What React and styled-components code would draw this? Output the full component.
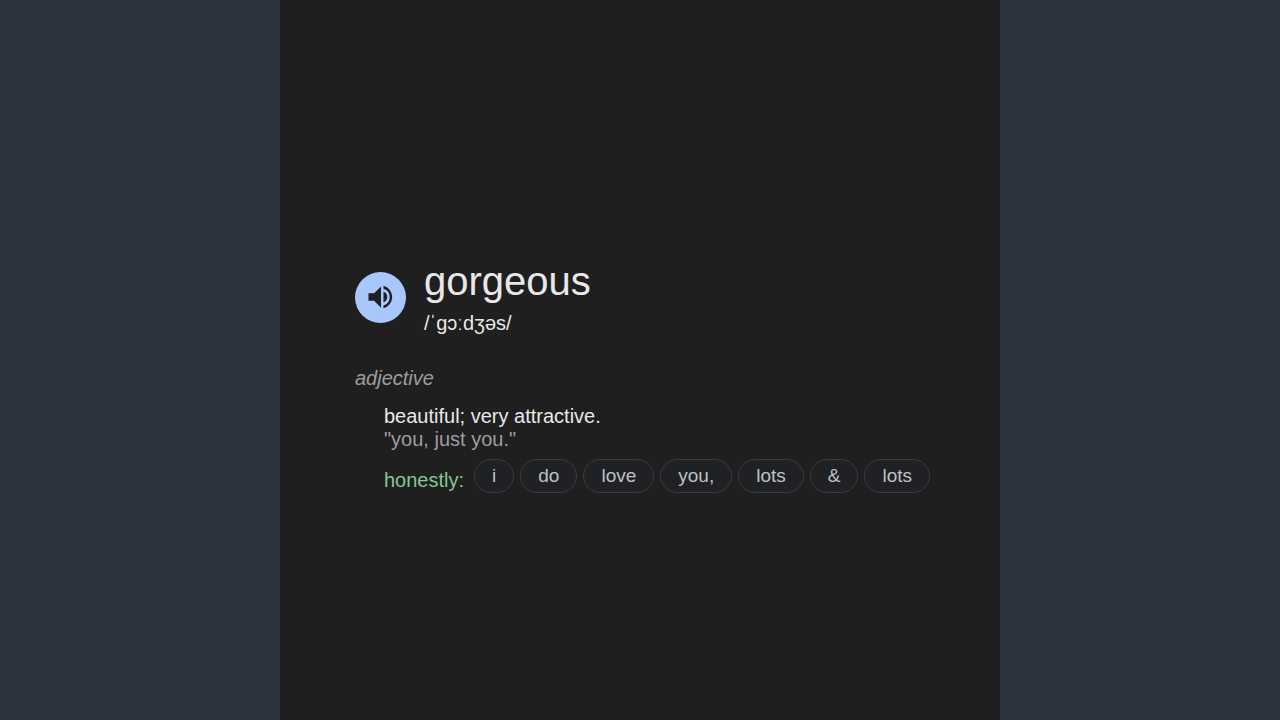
import styled, { createGlobalStyle } from "styled-components";

const GlobalStyle = createGlobalStyle`
  * {
    box-sizing: border-box;
  }
  body {
    margin: 0;
    background-color: #2d343f;
    font-family: "Liberation Sans", Arial, sans-serif;
  }
`;
const Page = styled.div`
  min-height: 100vh;
  display: flex;
  justify-content: center;
`;
const Card = styled.main`
  width: 100vh;
  max-width: 100%;
  padding: 28px 48px 0 75px;
  background-color: #1f1f1f;
  display: flex;
  flex-direction: column;
  justify-content: center;
`;
const Header = styled.header`
  display: flex;
  align-items: center;
  gap: 18px;
`;
const SoundBtn = styled.button`
  width: 51px;
  height: 51px;
  padding: 0;
  border: none;
  border-radius: 50%;
  background-color: #a8c7fa;
  color: #1f1f1f;
  display: flex;
  align-items: center;
  justify-content: center;
`;
const Word = styled.h1`
  margin: 0;
  color: #e8e8e8;
  font-size: 40px;
  font-weight: 400;
  line-height: 52px;
`;
const Phonetic = styled.p`
  margin: 0;
  color: #e8e8e8;
  font-size: 20px;
  line-height: 32px;
`;
const WordClass = styled.p`
  margin: 27px 0 15px;
  color: #9e9e9e;
  font-size: 20px;
  font-style: italic;
  line-height: 24px;
`;
const Meaning = styled.section`
  padding-left: 29px;
`;
const Text = styled.p`
  margin: 0;
  color: ${(props) => (props.$quote ? "#9e9e9e" : "#e8e8e8")};
  font-size: 20px;
  line-height: 23px;
`;
const Similar = styled.div`
  margin-top: 8px;
  display: flex;
  align-items: flex-start;
  gap: 10px;
`;
const Label = styled.span`
  padding-top: 10px;
  color: #81c995;
  font-size: 20px;
  line-height: 23px;
`;
const Chips = styled.div`
  display: flex;
  flex-wrap: wrap;
  gap: 6px;
`;
const Chip = styled.button`
  height: 34px;
  padding: 0 17px;
  border: 1px solid #3a3b3e;
  border-radius: 17px;
  background-color: #1f2125;
  color: #bdc1c6;
  font-family: inherit;
  font-size: 19px;
  line-height: 32px;
`;

const words = ["i", "do", "love", "you,", "lots", "&", "lots"];

function SpeakerIcon() {
  return (
    <svg width="30" height="30" viewBox="0 0 24 24" fill="currentColor" aria-hidden="true">
      <path d="M2 9v6h4.500l5.500 5.500V3.500L6.500 9H2zM17 12a4.500 4.500 0 0 0-3-4.200v8.400A4.500 4.500 0 0 0 17 12zM14 3v2.300a7 7 0 0 1 0 13.400V21a9.300 9.300 0 0 0 0-18z" />
    </svg>
  );
}

function App() {
  return (
    <Page>
      <GlobalStyle />
      <Card>
        <Header>
          <SoundBtn type="button" aria-label="Listen">
            <SpeakerIcon />
          </SoundBtn>
          <div>
            <Word>gorgeous</Word>
            <Phonetic>/ˈɡɔːdʒəs/</Phonetic>
          </div>
        </Header>
        <WordClass>adjective</WordClass>
        <Meaning>
          <Text>beautiful; very attractive.</Text>
          <Text $quote>"you, just you."</Text>
          <Similar>
            <Label>honestly:</Label>
            <Chips>
              {words.map((word, index) => (
                <Chip type="button" key={index}>
                  {word}
                </Chip>
              ))}
            </Chips>
          </Similar>
        </Meaning>
      </Card>
    </Page>
  );
}

export default App;
